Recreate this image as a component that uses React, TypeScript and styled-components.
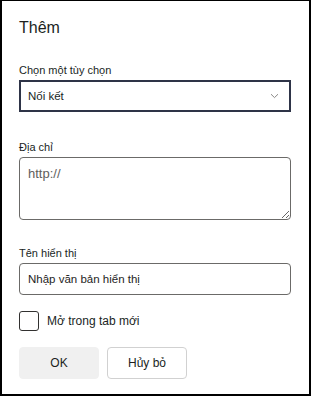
import React from 'react'
import styled, { createGlobalStyle } from 'styled-components'

const GlobalStyle = createGlobalStyle`
  html, body {
    margin: 0;
    padding: 0;
    background: #ffffff;
  }
  * {
    box-sizing: border-box;
  }
`

const Panel = styled.div`
  width: 311px;
  height: 396px;
  border: 2px solid #000000;
  border-top-width: 1px;
  padding: 16px 18px 0 17px;
  font-family: 'Liberation Sans', Arial, sans-serif;
  color: #201f1e;
  display: flex;
  flex-direction: column;
`

const Title = styled.h2`
  margin: 0 0 23px;
  font-size: 16px;
  line-height: 22px;
  font-weight: 400;
`

const Field = styled.div<{ $gap: number }>`
  display: flex;
  flex-direction: column;
  margin-bottom: ${({ $gap }) => $gap}px;
`

const Label = styled.label`
  font-size: 11px;
  line-height: 16px;
  margin-bottom: 2px;
`

const SelectBox = styled.div`
  height: 32px;
  border: 2px solid #2e3447;
  display: flex;
  align-items: center;
  justify-content: space-between;
  padding: 0 10px 0 7px;
  font-size: 11.5px;
`

const TextArea = styled.textarea`
  display: block;
  width: 100%;
  height: 63px;
  border: 1px solid #6b6a68;
  border-radius: 4px;
  padding: 8px;
  font-family: inherit;
  font-size: 13px;
  line-height: 16px;
  color: #201f1e;
  &::placeholder {
    color: #5f5e5c;
  }
`

const TextInput = styled.input`
  display: block;
  width: 100%;
  height: 32px;
  border: 1px solid #6b6a68;
  border-radius: 4px;
  padding: 0 8px;
  font-family: inherit;
  font-size: 11.5px;
  color: #201f1e;
  &::placeholder {
    color: #252423;
  }
`

const CheckRow = styled.label`
  display: flex;
  align-items: center;
  gap: 8px;
  margin: 0 0 16px;
  font-size: 12px;
`

const CheckBox = styled.span`
  width: 20px;
  height: 20px;
  border: 1px solid #323130;
  border-radius: 3px;
`

const Buttons = styled.div`
  display: flex;
  gap: 8px;
`

const Button = styled.button<{ $primary?: boolean }>`
  width: 80px;
  height: 32px;
  border-radius: 4px;
  border: 1px solid ${({ $primary }) => ($primary ? '#f0f0f0' : '#d1d1d1')};
  background: ${({ $primary }) => ($primary ? '#f0f0f0' : '#ffffff')};
  font-family: inherit;
  font-size: 12px;
  color: #201f1e;
  padding: 0;
`

const Chevron = () => (
  <svg width="9" height="6" viewBox="0 0 9 6" fill="none">
    <path d="M1 1.2 L4.5 4.6 L8 1.2" stroke="#8a8886" strokeWidth="1" />
  </svg>
)

export default function App() {
  return (
    <>
      <GlobalStyle />
      <Panel>
        <Title>Thêm</Title>
        <Field $gap={27}>
          <Label>Chọn một tùy chọn</Label>
          <SelectBox>
            <span>Nối kết</span>
            <Chevron />
          </SelectBox>
        </Field>
        <Field $gap={25}>
          <Label>Địa chỉ</Label>
          <TextArea placeholder="http://" />
        </Field>
        <Field $gap={16}>
          <Label>Tên hiển thị</Label>
          <TextInput placeholder="Nhập văn bản hiển thị" />
        </Field>
        <CheckRow>
          <CheckBox />
          Mở trong tab mới
        </CheckRow>
        <Buttons>
          <Button $primary>OK</Button>
          <Button>Hủy bỏ</Button>
        </Buttons>
      </Panel>
    </>
  )
}
